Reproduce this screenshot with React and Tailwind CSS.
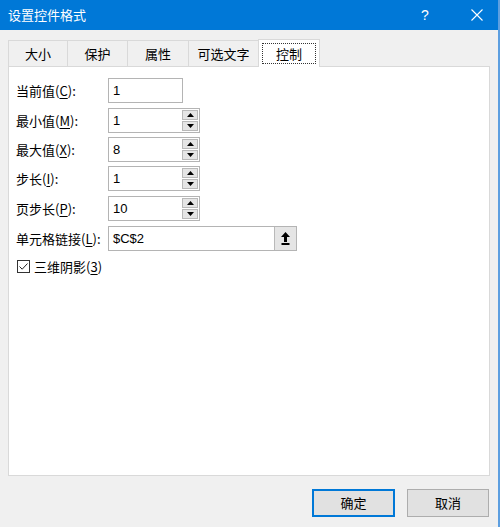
import React from "react";

const font = { fontFamily: '"Noto Sans CJK SC", "Noto Sans", sans-serif' };

function Label({ text, k, rest }) {
  return (
    <div className="w-[92px] shrink-0 text-[13px] text-black leading-none">
      {text}(<span className="underline underline-offset-2">{k}</span>){rest}
    </div>
  );
}

function Spin() {
  return (
    <div className="flex flex-col gap-[1px] w-[17px] h-[23px] py-[1px] pr-[1px]">
      <div className="flex-1 bg-[#e5e5e5] border border-[#b9b9b9] flex items-center justify-center">
        <svg width="7" height="4" viewBox="0 0 7 4"><path d="M0 4 L3.5 0 L7 4 Z" fill="#000" /></svg>
      </div>
      <div className="flex-1 bg-[#e5e5e5] border border-[#b9b9b9] flex items-center justify-center">
        <svg width="7" height="4" viewBox="0 0 7 4"><path d="M0 0 L3.5 4 L7 0 Z" fill="#000" /></svg>
      </div>
    </div>
  );
}

function Row({ text, k, value, spin, mt }) {
  return (
    <div className={`flex items-center h-[25px] ${mt}`}>
      <Label text={text} k={k} rest=":" />
      <div
        className={`h-[25px] border border-[#b4b4b4] bg-white flex items-center justify-between ${spin ? "w-[92px]" : "w-[75px]"}`}
      >
        <span className="pl-[4px] text-[13px] text-black" style={{ fontFamily: '"Liberation Sans", sans-serif' }}>
          {value}
        </span>
        {spin && <Spin />}
      </div>
    </div>
  );
}

export default function App() {
  return (
    <div className="w-[500px] h-[527px] bg-[#f0f0f0] flex flex-col border-r-2 border-[#5d9fe0] overflow-hidden" style={font}>
      {/* Title bar */}
      <div className="h-[30px] bg-[#0078d7] flex items-center text-white shrink-0">
        <div className="pl-[8px] text-[13px] flex-1">设置控件格式</div>
        <div className="w-[46px] text-center text-[14px] mr-[6px]" style={{ fontFamily: '"Liberation Sans", sans-serif' }}>?</div>
        <div className="w-[46px] flex items-center justify-center mr-[-2px]">
          <svg width="12" height="12" viewBox="0 0 12 12">
            <path d="M0.5 0.5 L11.5 11.5 M11.5 0.5 L0.5 11.5" stroke="#fff" strokeWidth="1.1" />
          </svg>
        </div>
      </div>

      {/* Tabs */}
      <div className="flex items-end h-[27px] mt-[9px] pl-[8px] shrink-0 relative z-10">
        {[
          ["大小", "w-[59px]"],
          ["保护", "w-[60px]"],
          ["属性", "w-[61px]"],
          ["可选文字", "w-[70px]"],
        ].map(([t, w]) => (
          <div
            key={t}
            className={`${w} h-[26px] border-t border-l border-[#d9d9d9] bg-[#f0f0f0] flex items-center justify-center text-[13px] text-black`}
          >
            {t}
          </div>
        ))}
        <div className="w-[62px] h-[28px] -mb-[1px] bg-white border-t border-l border-r border-[#d9d9d9] p-[3px]">
          <div className="w-full h-full border border-dotted border-[#333] flex items-center justify-center text-[13px] text-black">
            控制
          </div>
        </div>
      </div>

      {/* Panel */}
      <div className="mx-[8px] h-[410px] bg-white border border-[#d9d9d9] pl-[7px] pt-[11px] flex flex-col shrink-0">
        <Row text="当前值" k="C" value="1" mt="" />
        <Row text="最小值" k="M" value="1" spin mt="mt-[5px]" />
        <Row text="最大值" k="X" value="8" spin mt="mt-[4px]" />
        <Row text="步长" k="I" value="1" spin mt="mt-[4px]" />
        <Row text="页步长" k="P" value="10" spin mt="mt-[5px]" />
        <div className="flex items-center h-[25px] mt-[5px]">
          <Label text="单元格链接" k="L" rest=":" />
          <div className="w-[189px] h-[25px] border border-[#b4b4b4] bg-white flex items-center justify-between">
            <span className="pl-[4px] text-[13px] text-black" style={{ fontFamily: '"Liberation Sans", sans-serif' }}>
              $C$2
            </span>
            <div className="w-[22px] h-[23px] bg-[#e5e5e5] border-l border-[#b9b9b9] flex items-center justify-center">
              <svg width="9" height="13" viewBox="0 0 9 13">
                <path d="M4.5 0 L9 5 L6 5 L6 10 L3 10 L3 5 L0 5 Z" fill="#000" />
                <rect x="0.5" y="11" width="8" height="2" fill="#000" />
              </svg>
            </div>
          </div>
        </div>
        <div className="flex items-center mt-[9px] ml-[1px]">
          <div className="w-[13px] h-[13px] border border-[#333] bg-white flex items-center justify-center">
            <svg width="11" height="11" viewBox="0 0 11 11">
              <path d="M1.5 5.5 L4.2 8.2 L9.5 2.5" stroke="#222" strokeWidth="1" fill="none" />
            </svg>
          </div>
          <div className="ml-[4px] text-[13px] text-black leading-none">
            三维阴影(<span className="underline underline-offset-2">3</span>)
          </div>
        </div>
      </div>

      {/* Buttons */}
      <div className="flex justify-end gap-[12px] pr-[9px] mt-[13px]">
        <div className="w-[83px] h-[28px] bg-[#e1e1e1] border-2 border-[#0078d7] flex items-center justify-center text-[13px] text-black">
          确定
        </div>
        <div className="w-[82px] h-[28px] bg-[#e1e1e1] border border-[#adadad] flex items-center justify-center text-[13px] text-black">
          取消
        </div>
      </div>
    </div>
  );
}
